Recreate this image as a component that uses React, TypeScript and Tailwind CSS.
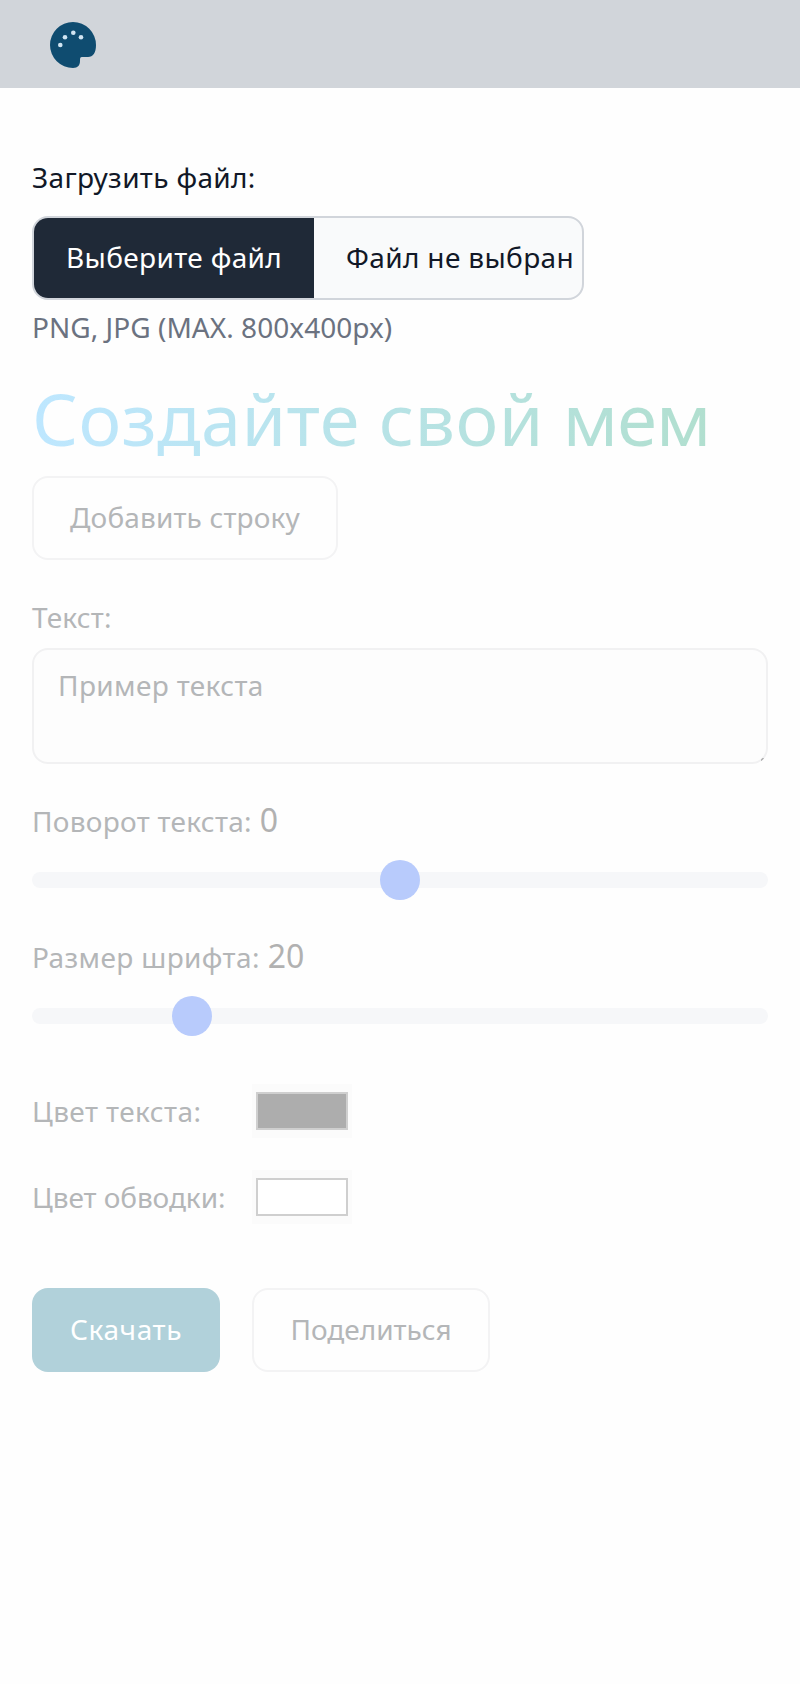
function RangeField({
  label,
  value,
  left,
  gap,
  tracking,
}: {
  label: string;
  value: number;
  left: number;
  gap: string;
  tracking: string;
}) {
  return (
    <div className={gap}>
      <div className="flex h-12 items-baseline gap-2">
        <span className={`text-[28px] leading-[40px] ${tracking}`}>{label}</span>
        <span className="text-[32px] leading-[48px] text-[#b1b1b1]">{value}</span>
      </div>
      <div className="relative mt-[28px] h-4 rounded-full bg-[#f6f7f9]">
        <div className="absolute -top-3 size-10 rounded-full bg-[#b8cbfc]" style={{ left }} />
      </div>
    </div>
  );
}

function ColorField({ label, fill, tracking }: { label: string; fill: string; tracking: string }) {
  return (
    <div className="flex h-[54px] items-center">
      <span className={`w-[220px] text-[28px] leading-[40px] ${tracking}`}>{label}</span>
      <div className="h-[54px] w-[100px] bg-[#fbfbfb] px-1 py-2">
        <div className={`h-[38px] w-[92px] border-2 border-[#cfcfcf] ${fill}`} />
      </div>
    </div>
  );
}

export default function App() {
  return (
    <div className="min-h-[1684px] bg-[#fefefe] font-['Noto_Sans',sans-serif]">
      <header className="flex h-[88px] items-center bg-[#d1d5da] pl-[50px]">
        <svg width="46" height="46" viewBox="0 0 46 46" className="mt-[2px]">
          <path fill="#0f4c70" d="M23 0a23 23 0 1 0 0 46c5 0 7-3 7-7c0-3 0-4 2-4h6c5 0 8-4 8-12A23 23 0 0 0 23 0Z" />
          <g fill="#d1e5f2">
            <circle cx="10.3" cy="23" r="2.3" />
            <circle cx="15" cy="15.2" r="2.3" />
            <circle cx="23.3" cy="10.8" r="2.3" />
            <circle cx="31" cy="15.2" r="2.3" />
          </g>
        </svg>
      </header>
      <main className="flex flex-col px-8 pt-[69px] text-[28px] leading-[40px] text-[#b4b6b8]">
        <label className="tracking-[0.34px] text-[#111827]">Загрузить файл:</label>
        <div className="mt-[19px] flex h-[84px] w-[552px] items-center overflow-hidden rounded-2xl border-2 border-[#d1d5db] bg-[#f9fafb] tracking-[0.36px] whitespace-nowrap text-[#111827]">
          <span className="flex h-full w-[280px] items-center bg-[#1f2937] pb-[2px] pl-8 text-white">Выберите файл</span>
          <span className="pb-[2px] pl-8">Файл не выбран</span>
        </div>
        <p className="mt-[7px] tracking-[0.04px] text-[#6b7280]">PNG, JPG (MAX. 800x400px)</p>
        <h1 className="mt-[31px] w-fit bg-gradient-to-r from-[#bee7ff] to-[#b1dfcf] bg-clip-text text-[72px] leading-[80px] text-transparent">
          <span className="tracking-[0.35px]">Создайте свой </span>
          <span className="tracking-[-0.9px]">мем</span>
        </h1>
        <button className="mt-[18px] h-[84px] w-[306px] rounded-2xl border-2 border-[#f3f3f4] pb-[2px] tracking-[0.15px]">Добавить строку</button>
        <label className="mt-[37px] tracking-[0.18px]">Текст:</label>
        <div className="relative mt-[11px] h-[116px] rounded-2xl border-2 border-[#f1f1f2] bg-[#fdfdfd] px-6 pt-[15px] tracking-[0.36px]">
          Пример текста
          <svg className="absolute right-[2px] bottom-[1px]" width="3" height="3" viewBox="0 0 3 3">
            <path d="M0 2.5L2.5 0" stroke="#aaa" strokeWidth="1.3" />
          </svg>
        </div>
        <RangeField label="Поворот текста:" value={0} left={348} gap="mt-[32px]" tracking="tracking-[0.28px]" />
        <RangeField label="Размер шрифта:" value={20} left={140} gap="mt-[44px]" tracking="tracking-[0.37px]" />
        <div className="mt-[60px] flex flex-col gap-8">
          <ColorField label="Цвет текста:" fill="bg-[#adadad]" tracking="tracking-[0.42px]" />
          <ColorField label="Цвет обводки:" fill="bg-white" tracking="tracking-[-0.06px]" />
        </div>
        <div className="mt-16 flex gap-8">
          <button className="h-[84px] w-[188px] rounded-2xl bg-[#b1d1da] pb-[2px] tracking-[0.6px] text-white">Скачать</button>
          <button className="h-[84px] w-[238px] rounded-2xl border-2 border-[#f3f3f4] pb-[2px]">Поделиться</button>
        </div>
      </main>
    </div>
  );
}
